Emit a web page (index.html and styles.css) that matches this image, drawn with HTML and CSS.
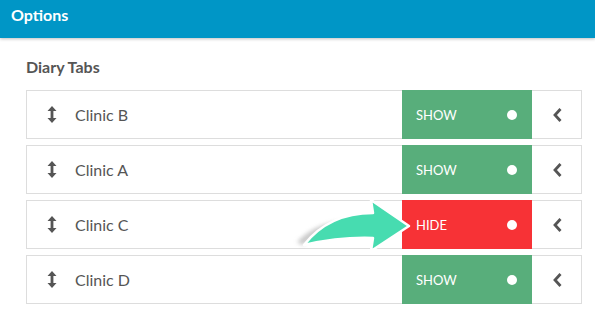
FILE: index.html
```html
<!DOCTYPE html>
<html>
<head>
<meta charset="utf-8">
<link rel="stylesheet" href="styles.css">
</head>
<body>
<div class="header">Options</div>
<div class="content">
  <div class="title">Diary Tabs</div>
  <div class="list">
    <div class="row">
      <span class="drag"><svg width="10" height="17" viewBox="0 0 10 17"><path d="M5 0 L9.5 5 L6.4 5 L6.4 12 L9.5 12 L5 17 L0.5 12 L3.6 12 L3.6 5 L0.5 5 Z" fill="#555"/></svg></span>
      <span class="name">Clinic B</span>
      <span class="status show">SHOW<i class="dot"></i></span>
      <span class="chev"><svg width="11" height="16" viewBox="0 0 11 16"><path d="M8.5 2 L3 8 L8.5 14" fill="none" stroke="#555" stroke-width="2.8"/></svg></span>
    </div>
    <div class="row">
      <span class="drag"><svg width="10" height="17" viewBox="0 0 10 17"><path d="M5 0 L9.5 5 L6.4 5 L6.4 12 L9.5 12 L5 17 L0.5 12 L3.6 12 L3.6 5 L0.5 5 Z" fill="#555"/></svg></span>
      <span class="name">Clinic A</span>
      <span class="status show">SHOW<i class="dot"></i></span>
      <span class="chev"><svg width="11" height="16" viewBox="0 0 11 16"><path d="M8.5 2 L3 8 L8.5 14" fill="none" stroke="#555" stroke-width="2.8"/></svg></span>
    </div>
    <div class="row">
      <span class="drag"><svg width="10" height="17" viewBox="0 0 10 17"><path d="M5 0 L9.5 5 L6.4 5 L6.4 12 L9.5 12 L5 17 L0.5 12 L3.6 12 L3.6 5 L0.5 5 Z" fill="#555"/></svg></span>
      <span class="name">Clinic C</span>
      <span class="status hide">HIDE<i class="dot"></i></span>
      <span class="chev"><svg width="11" height="16" viewBox="0 0 11 16"><path d="M8.5 2 L3 8 L8.5 14" fill="none" stroke="#555" stroke-width="2.8"/></svg></span>
      <svg class="pointer" width="125" height="62" viewBox="0 0 125 62">
        <defs><filter id="b" x="-20%" y="-20%" width="140%" height="140%"><feGaussianBlur stdDeviation="2.2"/></filter></defs>
        <path d="M6 47 C22 30 45 24 70 26 L70 30 C45 30 25 38 12 50 Z" fill="#9a9a9a" opacity="0.55" filter="url(#b)"/>
        <path d="M13 50 C30 28 55 18 82 18 L80 5 L118 31 L80 56 L82 43 C55 42 35 45 13 50 Z" fill="#47dcb0" stroke="#fff" stroke-width="2.5" stroke-linejoin="round"/>
      </svg>
    </div>
    <div class="row">
      <span class="drag"><svg width="10" height="17" viewBox="0 0 10 17"><path d="M5 0 L9.5 5 L6.4 5 L6.4 12 L9.5 12 L5 17 L0.5 12 L3.6 12 L3.6 5 L0.5 5 Z" fill="#555"/></svg></span>
      <span class="name">Clinic D</span>
      <span class="status show">SHOW<i class="dot"></i></span>
      <span class="chev"><svg width="11" height="16" viewBox="0 0 11 16"><path d="M8.5 2 L3 8 L8.5 14" fill="none" stroke="#555" stroke-width="2.8"/></svg></span>
    </div>
  </div>
</div>
</body>
</html>
```
FILE: styles.css
```css
* { box-sizing: border-box; }
html, body { margin: 0; padding: 0; background: #fff; }
body { font-family: Lato, "Open Sans", sans-serif; color: #555; width: 595px; height: 309px; overflow: hidden; }
.header {
  height: 38px;
  background: #0096c6;
  color: #fff;
  font-weight: bold;
  font-size: 16px;
  line-height: 30px;
  padding-left: 11px;
  box-shadow: 0 1px 3px rgba(0,0,0,0.25);
}
.content { padding: 19px 13px 0 26px; }
.title { font-weight: bold; font-size: 16px; line-height: 20px; color: #555; margin-bottom: 13px; }
.list { display: flex; flex-direction: column; gap: 6px; }
.row {
  position: relative;
  display: flex;
  align-items: stretch;
  height: 49px;
  border: 1px solid #ddd;
}
.drag { width: 48px; display: flex; align-items: center; justify-content: center; padding: 0 0 1px 1px; }
.drag svg { display: block; }
.name { flex: 1; display: flex; align-items: center; font-size: 16px; color: #555; }
.status {
  width: 130px;
  margin: -1px 0;
  display: flex;
  align-items: center;
  justify-content: space-between;
  padding: 0 15px 0 14px;
  color: #fff;
  font-size: 13px;
}
.status.show { background: #58ae7b; }
.status.hide { background: #f73236; }
.dot { display: block; width: 10px; height: 10px; border-radius: 50%; background: #fff; }
.chev { width: 49px; display: flex; align-items: center; justify-content: center; padding-left: 2px; }
.chev svg { display: block; }
.pointer { position: absolute; left: 264px; top: -6px; }
```
